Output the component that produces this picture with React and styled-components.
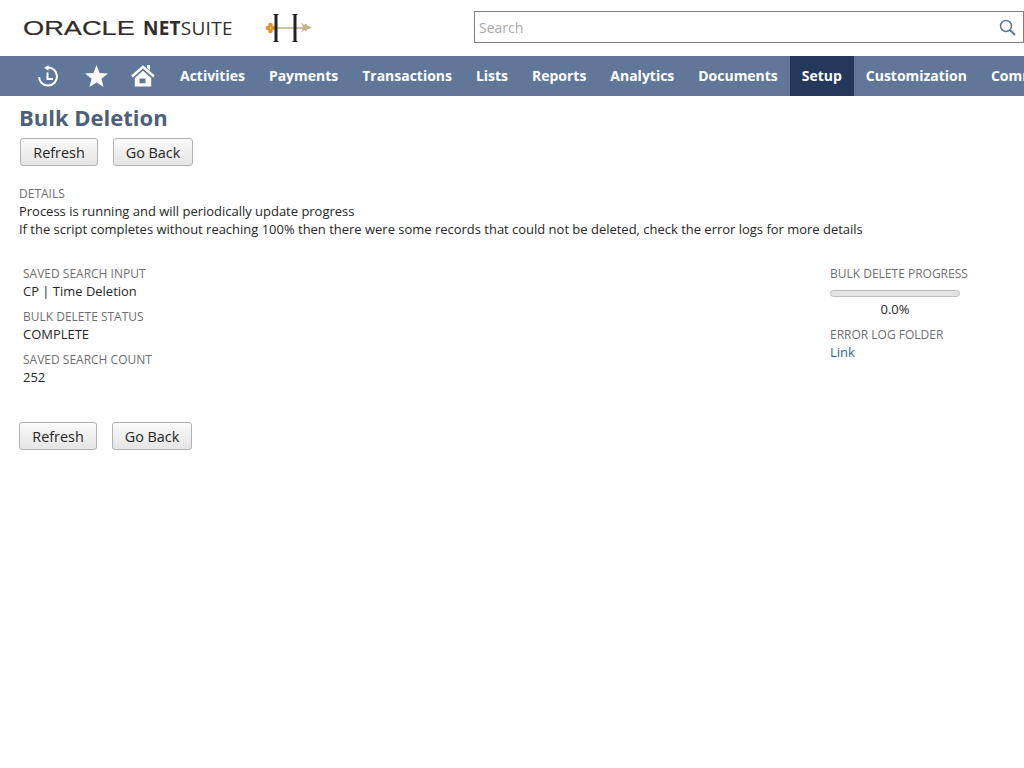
import styled, { createGlobalStyle } from "styled-components";

const navItems = ["Activities", "Payments", "Transactions", "Lists", "Reports", "Analytics", "Documents", "Setup", "Customization", "Commerce"];

const GlobalStyle = createGlobalStyle`
  body {
    margin: 0;
    background: #fff;
    font-family: "Open Sans", sans-serif;
    color: #262626;
  }
`;

const Page = styled.div`
  width: 1024px;
  min-height: 768px;
  overflow: hidden;
`;

const Header = styled.header`
  height: 56px;
  display: flex;
  align-items: center;
  justify-content: space-between;
  padding-left: 23px;
`;

const Brand = styled.div`
  display: flex;
  align-items: center;
`;

const OracleText = styled.span`
  display: inline-block;
  width: 120px;
  font-family: "Liberation Sans", sans-serif;
  font-size: 20px;
  line-height: 20px;
  color: #312d2a;
  -webkit-text-stroke: 0.2px #312d2a;
  transform: scaleX(1.36);
  transform-origin: left center;
  white-space: nowrap;
`;

const NetSuiteText = styled.span`
  width: 90px;
  margin-right: 32px;
  font-size: 19px;
  line-height: 20px;
  letter-spacing: 0.25px;
  color: #312d2a;
  white-space: nowrap;
  b {
    font-weight: 700;
  }
`;

const SearchBox = styled.div`
  width: 550px;
  height: 32px;
  box-sizing: border-box;
  margin-top: -2px;
  border: 1px solid #7f7f7f;
  display: flex;
  align-items: center;
  justify-content: space-between;
  padding: 0 7px 0 4px;
  font-size: 14px;
  color: #a9a9a9;
`;

const Nav = styled.nav`
  height: 40px;
  background: #607799;
  display: flex;
  align-items: stretch;
  padding-left: 38px;
  white-space: nowrap;
`;

const IconSlot = styled.div`
  flex: 0 0 ${({ $width }) => $width}px;
  display: flex;
  align-items: center;
  color: #fff;
`;

const NavItem = styled.div`
  flex: none;
  display: flex;
  align-items: center;
  padding: 0 12px 2px;
  font-size: 13.98px;
  font-weight: 700;
  color: #fff;
  background: ${({ $active }) => ($active ? "#24385b" : "transparent")};
`;

const Content = styled.main`
  padding: 9px 0 0 19px;
`;

const Title = styled.h1`
  margin: 0;
  font-size: 22px;
  line-height: 25px;
  font-weight: 700;
  color: #4d5f79;
`;

const ButtonRow = styled.div`
  display: flex;
  gap: 15px;
  margin-top: ${({ $top }) => $top}px;
  margin-left: ${({ $left }) => $left}px;
`;

const Button = styled.button`
  width: ${({ $width }) => $width}px;
  height: 28px;
  box-sizing: border-box;
  padding: 0;
  border: 1px solid #b2b2b2;
  border-radius: 3px;
  background: linear-gradient(#fafafa, #e5e5e5);
  font-family: "Open Sans", sans-serif;
  font-size: 14.4px;
  color: #262626;
`;

const Label = styled.div`
  font-size: 12px;
  line-height: 17px;
  color: #6f6f6f;
  white-space: nowrap;
`;

const Value = styled.div`
  font-size: 12.97px;
  line-height: 18px;
  color: #262626;
  margin-bottom: ${({ $gap }) => $gap || 0}px;
`;

const Details = styled.section`
  margin-top: 19px;
`;

const Fields = styled.section`
  display: flex;
  justify-content: space-between;
  margin-top: 27px;
  padding: 0 64px 0 4px;
`;

const Column = styled.div`
  width: ${({ $width }) => $width}px;
`;

const ProgressTrack = styled.div`
  height: 7px;
  box-sizing: border-box;
  margin-top: 8px;
  border: 1px solid #bdbdbd;
  border-radius: 4px;
  background: #e4e4e4;
`;

const ProgressValue = styled.div`
  margin-top: 3px;
  margin-bottom: 8px;
  text-align: center;
  font-size: 13px;
  line-height: 18px;
`;

const DetailLink = styled.a`
  display: block;
  font-size: 13px;
  line-height: 18px;
  color: #24699a;
  text-decoration: none;
`;

const HistoryIcon = () => (
  <svg width="21" height="23" viewBox="0 -1 21 23" fill="none" stroke="#fff" strokeWidth="2">
    <path d="M10 1.5a9 9 0 1 1-9 9.5" />
    <path d="M10.5 -0.8L6 1.8l4.5 3z" fill="#fff" stroke="none" />
    <path d="M9.5 6.5v6.5h5.5" />
  </svg>
);

const StarIcon = () => (
  <svg width="23" height="22" viewBox="0 0 23 22">
    <path d="M11.5 0l3 7.9 8.5.5-6.6 5.4 2.2 8.2-7.1-4.6-7.1 4.6 2.2-8.2L0 8.4l8.5-.5z" fill="#fff" />
  </svg>
);

const HomeIcon = () => (
  <svg width="24" height="22" viewBox="0 0 24 22">
    <path d="M1 11.5L12 1.8l11 9.7" fill="none" stroke="#fff" strokeWidth="2.4" />
    <path d="M16 0h3v5.5l-3-2.6z" fill="#fff" />
    <path
      fillRule="evenodd"
      d="M3.8 13L12 5.8 20.2 13v8.6H3.8zM8.5 13.4v4.8h6v-4.8z"
      fill="#fff"
    />
  </svg>
);

const SearchIcon = () => (
  <svg width="17" height="17" viewBox="0 0 17 17" fill="none" stroke="#607799" strokeWidth="1.5">
    <circle cx="7" cy="7" r="5.5" />
    <path d="M11 11l5 5" strokeWidth="2" />
  </svg>
);

const LogoMark = () => (
  <svg width="48" height="30" viewBox="0 0 48 30">
    <rect x="8" y="14" width="32" height="2" fill="#cfc19a" />
    <path d="M36 9.5l3 2.5 2-1.5 1 2 5 2-5 2-1 2-2-1.5-3 2.5 2-5z" fill="#c4b48c" />
    <circle cx="3" cy="15" r="2.3" fill="#d9962c" />
    <circle cx="5.5" cy="12" r="2.3" fill="#d9962c" />
    <circle cx="5.5" cy="18" r="2.3" fill="#d9962c" />
    <circle cx="8" cy="15" r="2.3" fill="#d9962c" />
    <path d="M8.5 1h5v1h-1v26h1v1h-5v-1h1V2h-1z" fill="#222" />
    <path d="M27.5 1h5v1h-1v26h1v1h-5v-1h1V2h-1z" fill="#222" />
  </svg>
);

const App = () => (
  <Page>
    <GlobalStyle />
    <Header>
      <Brand>
        <OracleText>ORACLE</OracleText>
        <NetSuiteText>
          <b>NET</b>SUITE
        </NetSuiteText>
        <LogoMark />
      </Brand>
      <SearchBox>
        Search
        <SearchIcon />
      </SearchBox>
    </Header>
    <Nav>
      <IconSlot $width={47}>
        <HistoryIcon />
      </IconSlot>
      <IconSlot $width={46}>
        <StarIcon />
      </IconSlot>
      <IconSlot $width={37}>
        <HomeIcon />
      </IconSlot>
      {navItems.map((item) => (
        <NavItem key={item} $active={item === "Setup"}>
          {item}
        </NavItem>
      ))}
    </Nav>
    <Content>
      <Title>Bulk Deletion</Title>
      <ButtonRow $top={8} $left={1}>
        <Button $width={78}>Refresh</Button>
        <Button $width={80}>Go Back</Button>
      </ButtonRow>
      <Details>
        <Label>DETAILS</Label>
        <Value>Process is running and will periodically update progress</Value>
        <Value>If the script completes without reaching 100% then there were some records that could not be deleted, check the error logs for more details</Value>
      </Details>
      <Fields>
        <Column>
          <Label>SAVED SEARCH INPUT</Label>
          <Value $gap={8}>CP | Time Deletion</Value>
          <Label>BULK DELETE STATUS</Label>
          <Value $gap={8}>COMPLETE</Value>
          <Label>SAVED SEARCH COUNT</Label>
          <Value>252</Value>
        </Column>
        <Column $width={130}>
          <Label>BULK DELETE PROGRESS</Label>
          <ProgressTrack />
          <ProgressValue>0.0%</ProgressValue>
          <Label>ERROR LOG FOLDER</Label>
          <DetailLink href="#">Link</DetailLink>
        </Column>
      </Fields>
      <ButtonRow $top={36} $left={0}>
        <Button $width={78}>Refresh</Button>
        <Button $width={80}>Go Back</Button>
      </ButtonRow>
    </Content>
  </Page>
);

export default App;
